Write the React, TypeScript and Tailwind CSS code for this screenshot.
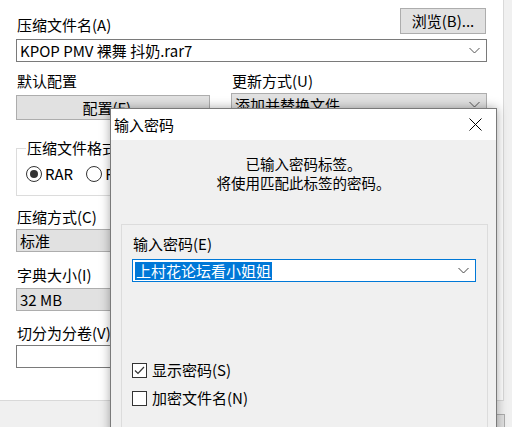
import React from "react";

const font = { fontFamily: '"Noto Sans CJK SC", "Noto Sans", sans-serif' };

function Chevron({ color = "#555" }: { color?: string }) {
  return (
    <svg width="11" height="7" viewBox="0 0 11 7" className="shrink-0">
      <path d="M0.5 1 L5.5 6 L10.5 1" fill="none" stroke={color} strokeWidth="1" />
    </svg>
  );
}

function Label({ text, k, className = "" }: { text: string; k: string; className?: string }) {
  return (
    <div className={"h-[18px] leading-[18px] text-[15px] text-black whitespace-nowrap " + className}>
      {text}({k})
    </div>
  );
}

export default function App() {
  return (
    <div style={font} className="relative w-[512px] h-[427px] overflow-hidden bg-[#f0f0f0] text-black">
      {/* back window */}
      <div className="flex h-[401px]">
        <div className="w-[504px] h-[401px] bg-white border-r border-b border-[#d9d9d9] px-4 pl-[16px] pr-[16px]">
          <div className="flex h-[34px] items-end justify-between">
            <div className="h-[18px] leading-[18px] text-[15px] pl-[1px]">压缩文件名(A)</div>
            <div className="w-[86px] h-[26px] bg-[#e1e1e1] border border-[#adadad] flex items-center justify-center text-[15px] leading-[18px] mr-[1px]">
              浏览(B)...
            </div>
          </div>
          <div className="mt-[5px] h-[23px] bg-white border border-[#7a7a7a] flex items-center justify-between pl-[3px] pr-[6px] text-[15px]">
            <span className="leading-[18px]">KPOP PMV 裸舞 抖奶.rar7</span>
            <Chevron />
          </div>
          <div className="mt-[10px] flex">
            <div className="w-[215px] pl-[1px] h-[18px] leading-[18px] text-[15px]">默认配置</div>
            <Label text="更新方式" k="U" className="pl-[1px]" />
          </div>
          <div className="flex items-start mt-[3px]">
            <div className="mt-[2px] w-[194px] h-[25px] bg-[#e1e1e1] border border-[#adadad] flex items-center justify-center text-[15px] leading-[18px]">
              配置(F)...
            </div>
            <div className="ml-[21px] flex-1 h-[23px] bg-[#e1e1e1] border border-[#adadad] flex items-center justify-between pl-[3px] pr-[6px] text-[15px]">
              <span className="leading-[18px]">添加并替换文件</span>
              <Chevron />
            </div>
          </div>
          <div className="relative mt-[28px] w-[234px] h-[48px] border border-[#dcdcdc]">
            <div className="absolute -top-[10px] left-[9px] bg-white px-[1px] h-[18px] leading-[18px] text-[15px]">
              压缩文件格式
            </div>
            <div className="flex items-center h-[18px] mt-[16px] pl-[9px]">
              <div className="w-[16px] h-[16px] rounded-full border border-[#333] flex items-center justify-center">
                <div className="w-[8px] h-[8px] rounded-full bg-[#333]" />
              </div>
              <span className="ml-[3px] text-[15px] leading-[18px]">RAR</span>
              <div className="ml-[13px] w-[16px] h-[16px] rounded-full border border-[#333]" />
              <span className="ml-[3px] text-[15px] leading-[18px]">RAR4</span>
            </div>
          </div>
          <Label text="压缩方式" k="C" className="mt-[12px] pl-[1px]" />
          <div className="mt-[3px] w-[194px] h-[23px] bg-[#e1e1e1] border border-[#adadad] flex items-center pl-[3px] text-[15px]">
            <span className="leading-[18px]">标准</span>
          </div>
          <Label text="字典大小" k="I" className="mt-[14px] pl-[1px]" />
          <div className="mt-[4px] w-[194px] h-[23px] bg-[#e1e1e1] border border-[#adadad] flex items-center pl-[3px] text-[15px]">
            <span className="leading-[18px]">32 MB</span>
          </div>
          <Label text="切分为分卷" k="V" className="mt-[13px] pl-[1px]" />
          <div className="mt-[3px] w-[194px] h-[23px] bg-white border border-[#7a7a7a]" />
        </div>
        <div className="flex-1" />
      </div>
      <div className="flex justify-end pr-[7px] pt-[13px]">
        <div className="w-[90px] h-[26px] bg-[#e1e1e1] border border-[#adadad]" />
      </div>

      {/* modal dialog */}
      <div className="absolute left-[110px] top-[108px] w-[387px] h-[340px] bg-[#f0f0f0] border border-[#7a7a7a] shadow-[0_0_10px_rgba(0,0,0,0.35)]">
        <div className="h-[31px] bg-white flex items-center justify-between pl-[3px] pr-[14px]">
          <span className="text-[15px] leading-[18px]">输入密码</span>
          <svg width="13" height="13" viewBox="0 0 13 13">
            <path d="M0.5 0.5 L12.5 12.5 M12.5 0.5 L0.5 12.5" stroke="#000" strokeWidth="1" fill="none" />
          </svg>
        </div>
        <div className="pt-[14px] text-center text-[14.5px] leading-[19px]">
          <div>已输入密码标签。</div>
          <div>将使用匹配此标签的密码。</div>
        </div>
        <div className="mt-[32px] ml-[10px] mr-[8px] h-[220px] border border-[#dcdcdc] pl-[10px] pr-[11px]">
          <Label text="输入密码" k="E" className="mt-[10px] pl-[1px]" />
          <div className="mt-[6px] h-[23px] bg-white border border-[#0078d7] flex items-center justify-between pl-[2px] pr-[6px]">
            <span className="bg-[#0078d7] text-white text-[15px] leading-[18px] px-[1px]">上村花论坛看小姐姐</span>
            <Chevron color="#444" />
          </div>
          <div className="mt-[79px] flex items-center h-[18px]">
            <div className="w-[15px] h-[15px] border border-[#333] bg-white flex items-center justify-center">
              <svg width="11" height="9" viewBox="0 0 11 9">
                <path d="M1 4.5 L4 7.5 L10 1" stroke="#333" strokeWidth="1.2" fill="none" />
              </svg>
            </div>
            <span className="ml-[5px] text-[15px] leading-[18px]">显示密码(S)</span>
          </div>
          <div className="mt-[10px] flex items-center h-[18px]">
            <div className="w-[15px] h-[15px] border border-[#333] bg-white" />
            <span className="ml-[5px] text-[15px] leading-[18px]">加密文件名(N)</span>
          </div>
        </div>
      </div>
    </div>
  );
}
